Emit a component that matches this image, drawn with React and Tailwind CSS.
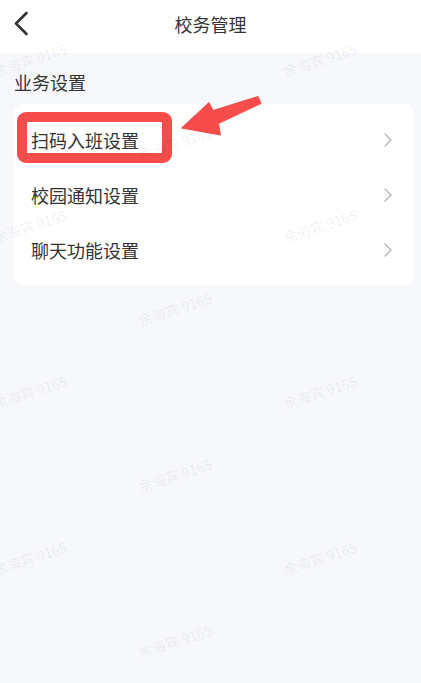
import React from "react";

const rows = ["扫码入班设置", "校园通知设置", "聊天功能设置"];

const marks = [];
[60, 226, 392, 558, 724].forEach((y) => {
  marks.push({ x: 30, y });
  marks.push({ x: 320, y });
});
[-23, 143, 309, 475, 641].forEach((y) => marks.push({ x: 175, y }));

function Chevron() {
  return (
    <svg width="10" height="16" viewBox="0 0 10 16" className="shrink-0">
      <path d="M2 2 L8 8 L2 14" fill="none" stroke="#b3b3b3" strokeWidth="1.4" strokeLinecap="round" strokeLinejoin="round" />
    </svg>
  );
}

export default function App() {
  return (
    <div
      className="relative w-[421px] h-[683px] overflow-hidden bg-[#f7f8fc] text-[#333333]"
      style={{ fontFamily: '"Noto Sans CJK SC", "Noto Sans", sans-serif' }}
    >
      <header className="relative h-[53px] bg-white flex items-center justify-center">
        <svg width="16" height="26" viewBox="0 0 16 26" className="absolute left-[13px] top-[11px]">
          <path d="M13.5 2 L3 12.5 L13.5 23" fill="none" stroke="#333333" strokeWidth="2.6" strokeLinecap="round" strokeLinejoin="round" />
        </svg>
        <h1 className="text-[18px] leading-none text-[#333333] -mt-[5px]">校务管理</h1>
      </header>

      <div className="px-[14px] pt-[19px] pb-[12px] text-[18px] leading-[20px]">业务设置</div>

      <div className="relative ml-[13px] mr-[7px] bg-white rounded-[10px] py-[8px]">
        {rows.map((r) => (
          <div key={r} className="h-[55px] flex items-center justify-between pl-[18px] pr-[21px]">
            <span className="text-[18px] leading-none">{r}</span>
            <Chevron />
          </div>
        ))}
        <div className="absolute left-[4px] top-[8px] w-[155px] h-[51px] border-[10px] border-[#f64c4b] rounded-[9px]" />
      </div>

      <svg className="absolute left-0 top-0 pointer-events-none" width="421" height="683" viewBox="0 0 421 683">
        <polygon
          points="181.5,128 209,102.5 213,110.5 258,96.5 261,103.5 218.5,123.5 220.5,135"
          fill="#f64c4b"
          stroke="#f64c4b"
          strokeWidth="1"
          strokeLinejoin="round"
        />
      </svg>

      <div className="absolute inset-0 pointer-events-none">
        {marks.map((m, i) => (
          <div
            key={i}
            className="absolute whitespace-nowrap text-[14px] leading-none text-[#000000]/[0.07]"
            style={{ left: m.x, top: m.y, transform: "translate(-50%, -50%) rotate(-18deg)" }}
          >
            余海宾 9165
          </div>
        ))}
      </div>
    </div>
  );
}
